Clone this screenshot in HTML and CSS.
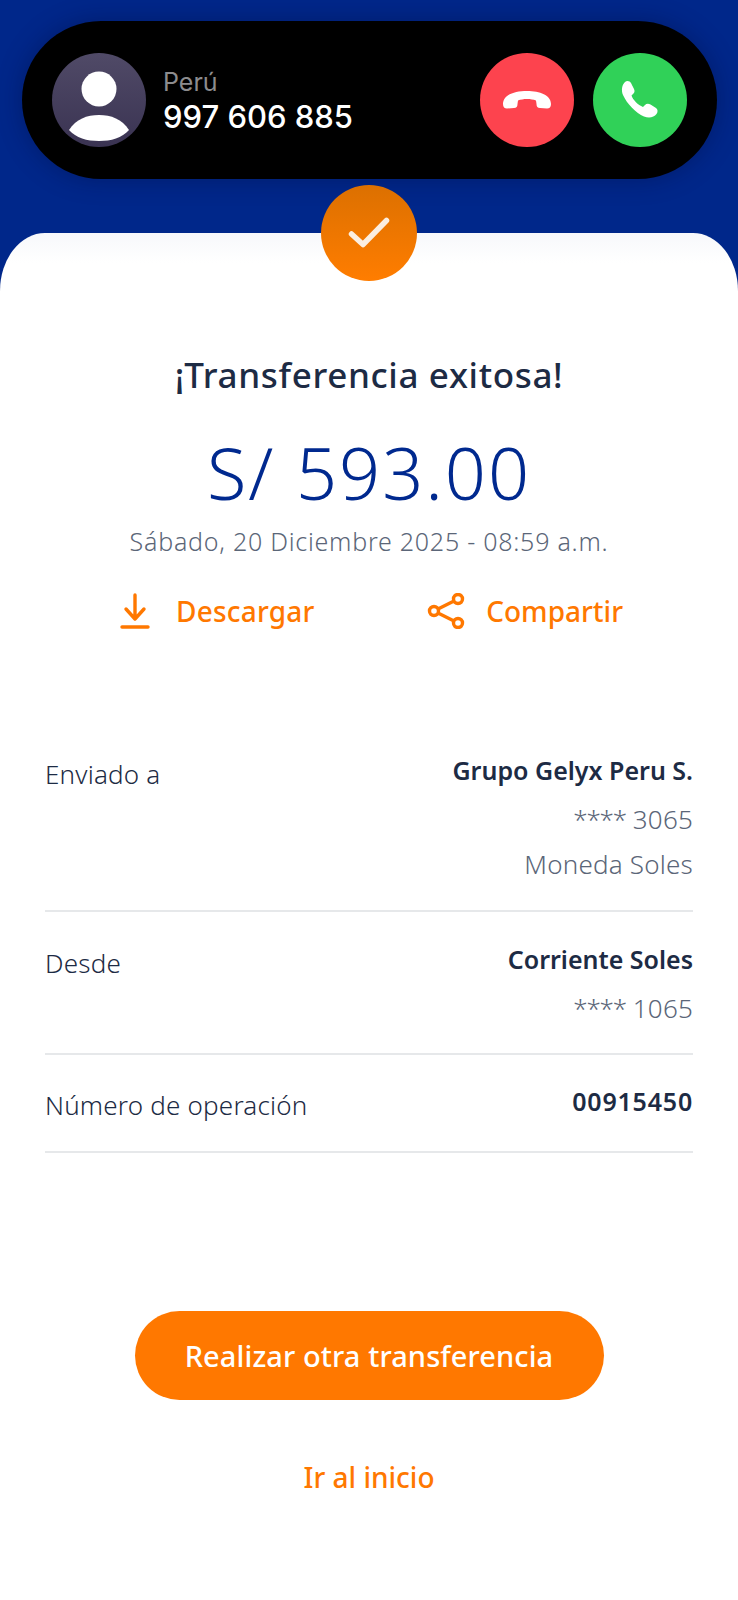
FILE: index.html
```html
<!DOCTYPE html>
<html lang="es">
<head>
    <meta charset="UTF-8">
    <title>Transferencia exitosa</title>
    <link rel="stylesheet" href="styles.css">
</head>
<body>
    <div class="top">
        <div class="call">
            <div class="avatar">
                <svg width="94" height="94" viewBox="0 0 94 94">
                    <circle cx="47" cy="36" r="17.5" fill="#fff"/>
                    <path d="M17 77 C24 66 35 62 47 62 C59 62 70 66 77 77 C70 85 59 88 47 88 C35 88 24 85 17 77 Z" fill="#fff"/>
                </svg>
            </div>
            <div class="caller">
                <div class="caller-place">Perú</div>
                <div class="caller-number">997 606 885</div>
            </div>
            <div class="call-btn call-reject">
                <svg width="50" height="20" viewBox="0 0 50 20">
                    <path d="M1 14 C1 5 12 1 25 1 C38 1 49 5 49 14 C49 17 47.5 18.5 45 18.5 L38 18 C35.5 18 34.5 16.5 34.5 14 L34 10.5 C29 8.5 21 8.5 16 10.5 L15.5 14 C15.5 16.5 14.5 18 12 18 L5 18.5 C2.5 18.5 1 17 1 14 Z" fill="#fff"/>
                </svg>
            </div>
            <div class="call-btn call-accept">
                <svg width="42" height="42" viewBox="0 0 42 42">
                    <path d="M6 3 C8 1 11 2 12 4 L15 10 C16 12 15.5 14 14 15 L12.5 16.5 C14 21 19 26 24 28 L26 26 C27.5 24.5 29.5 24.5 31.5 25.5 L37 29 C39 30.5 39 33 37.5 35 C35 38.5 30 39.5 25 37.5 C17 34 8 25 4 16 C2 11 3 6 6 3 Z" fill="#fff"/>
                </svg>
            </div>
        </div>
    </div>

    <div class="card">
        <div class="badge">
            <svg width="42" height="32" viewBox="0 0 42 32">
                <path d="M3.5 17 L15 27.5 L38.5 3.5" fill="none" stroke="#fbeee0" stroke-width="5.5" stroke-linecap="round" stroke-linejoin="round"/>
            </svg>
        </div>

        <h1 class="title">¡Transferencia exitosa!</h1>
        <div class="amount">S/ 593.00</div>
        <div class="date">Sábado, 20 Diciembre 2025 - 08:59 a.m.</div>

        <div class="actions">
            <a class="action">
                <svg width="30" height="36" viewBox="0 0 30 36">
                    <path d="M15 2 V25 M6 16 L15 26 L24 16" fill="none" stroke="#ff7800" stroke-width="3.4" stroke-linecap="round" stroke-linejoin="round"/>
                    <path d="M2 34 H28" stroke="#ff7800" stroke-width="3.4" stroke-linecap="round"/>
                </svg>
                Descargar
            </a>
            <a class="action action-share">
                <svg width="38" height="36" viewBox="0 0 38 36">
                    <g fill="none" stroke="#ff7800" stroke-width="3.4">
                        <circle cx="7" cy="18" r="4.5"/>
                        <circle cx="31" cy="6" r="4.5"/>
                        <circle cx="31" cy="30" r="4.5"/>
                        <path d="M11 16 L27 8 M11 20 L27 28"/>
                    </g>
                </svg>
                Compartir
            </a>
        </div>

        <div class="details">
            <div class="row row-sent">
                <div class="row-label">Enviado a</div>
                <div class="row-values">
                    <div class="row-strong">Grupo Gelyx Peru S.</div>
                    <div class="row-muted"><span class="stars">****</span> 3065</div>
                    <div class="row-muted">Moneda Soles</div>
                </div>
            </div>
            <div class="row row-from">
                <div class="row-label">Desde</div>
                <div class="row-values">
                    <div class="row-strong">Corriente Soles</div>
                    <div class="row-muted"><span class="stars">****</span> 1065</div>
                </div>
            </div>
            <div class="row row-op">
                <div class="row-label">Número de operación</div>
                <div class="row-values">
                    <div class="row-strong row-num">00915450</div>
                </div>
            </div>
        </div>

        <button type="button" class="btn-main">Realizar otra transferencia</button>
        <a class="link-home">Ir al inicio</a>
    </div>
</body>
</html>
```

FILE: styles.css
```css
* {
    box-sizing: border-box;
}

html, body {
    margin: 0;
    padding: 0;
}

body {
    width: 738px;
    height: 1600px;
    overflow: hidden;
    background: #00278a;
    font-family: "Noto Sans", sans-serif;
}

.top {
    height: 233px;
    padding: 21px 21px 0 22px;
}

.call {
    display: flex;
    align-items: center;
    height: 158px;
    padding: 0 30px;
    background: #000;
    border-radius: 79px;
    box-shadow: 0 0 24px rgba(0, 15, 70, 0.45);
}

.avatar {
    width: 94px;
    height: 94px;
    border-radius: 50%;
    background: linear-gradient(#504a67, #3a3352);
}

.avatar svg {
    display: block;
}

.caller {
    flex: 1;
    margin-left: 17px;
    padding-top: 3px;
    font-family: Inter, sans-serif;
}

.caller-place {
    font-size: 25px;
    line-height: 30px;
    color: #8c8c8e;
}

.caller-number {
    font-size: 31px;
    line-height: 39px;
    font-weight: 500;
    color: #fff;
}

.call-btn {
    display: flex;
    align-items: center;
    justify-content: center;
    width: 94px;
    height: 94px;
    border-radius: 50%;
}

.call-reject {
    background: #fd434e;
}

.call-accept {
    margin-left: 19px;
    background: #30d158;
}

.card {
    position: relative;
    display: flex;
    flex-direction: column;
    align-items: center;
    height: 1367px;
    padding: 0 45px;
    background: linear-gradient(#f7f8fb, #fff 30px);
    border-radius: 45px 45px 0 0 / 58px 58px 0 0;
}

.badge {
    position: absolute;
    top: -48px;
    left: 321px;
    display: flex;
    align-items: center;
    justify-content: center;
    width: 96px;
    height: 96px;
    border-radius: 50%;
    background: linear-gradient(#dc7000, #ff7d00);
}

.title {
    margin: 119px 0 0;
    font-size: 35px;
    line-height: 46px;
    font-weight: 500;
    letter-spacing: 0.65px;
    color: #1d2b44;
}

.amount {
    margin-top: 32px;
    font-size: 72px;
    line-height: 84px;
    font-weight: 300;
    letter-spacing: 2px;
    color: #00298f;
}

.date {
    margin-top: 10px;
    font-size: 25px;
    line-height: 34px;
    font-weight: 300;
    letter-spacing: 0.75px;
    color: #5b6678;
}

.actions {
    display: flex;
    justify-content: space-between;
    width: 503px;
    margin: 33px 0 0 5px;
}

.action {
    display: flex;
    align-items: center;
    gap: 26px;
    font-size: 28px;
    line-height: 40px;
    font-weight: 500;
    letter-spacing: 0.2px;
    color: #ff7800;
}

.action-share {
    gap: 21px;
    letter-spacing: 0;
}

.details {
    width: 100%;
    margin-top: 121px;
}

.row {
    display: flex;
    justify-content: space-between;
    border-bottom: 2px solid #e6e8ea;
}

.row-sent {
    height: 160px;
}

.row-from {
    height: 143px;
    padding-top: 29px;
}

.row-op {
    height: 98px;
    padding-top: 28px;
}

.row-label {
    padding-top: 4px;
    font-size: 26px;
    line-height: 36px;
    font-weight: 300;
    letter-spacing: 0.2px;
    color: #1d2b44;
}

.row-values {
    text-align: right;
}

.row-strong {
    margin-bottom: 13px;
    font-size: 25px;
    line-height: 36px;
    font-weight: 600;
    color: #1d2b44;
}

.row-num {
    letter-spacing: 0.8px;
}

.row-muted {
    margin-top: 9px;
    font-size: 26px;
    line-height: 36px;
    font-weight: 300;
    letter-spacing: 0.2px;
    color: #5b6678;
}

.stars {
    letter-spacing: -1.2px;
}

.btn-main {
    width: 469px;
    height: 89px;
    margin-top: 158px;
    border: none;
    border-radius: 45px;
    background: #ff7800;
    font-family: inherit;
    font-size: 29px;
    font-weight: 500;
    letter-spacing: 0.1px;
    color: #fff;
}

.link-home {
    margin-top: 57px;
    font-size: 28px;
    line-height: 40px;
    font-weight: 500;
    color: #ff7800;
}
```
